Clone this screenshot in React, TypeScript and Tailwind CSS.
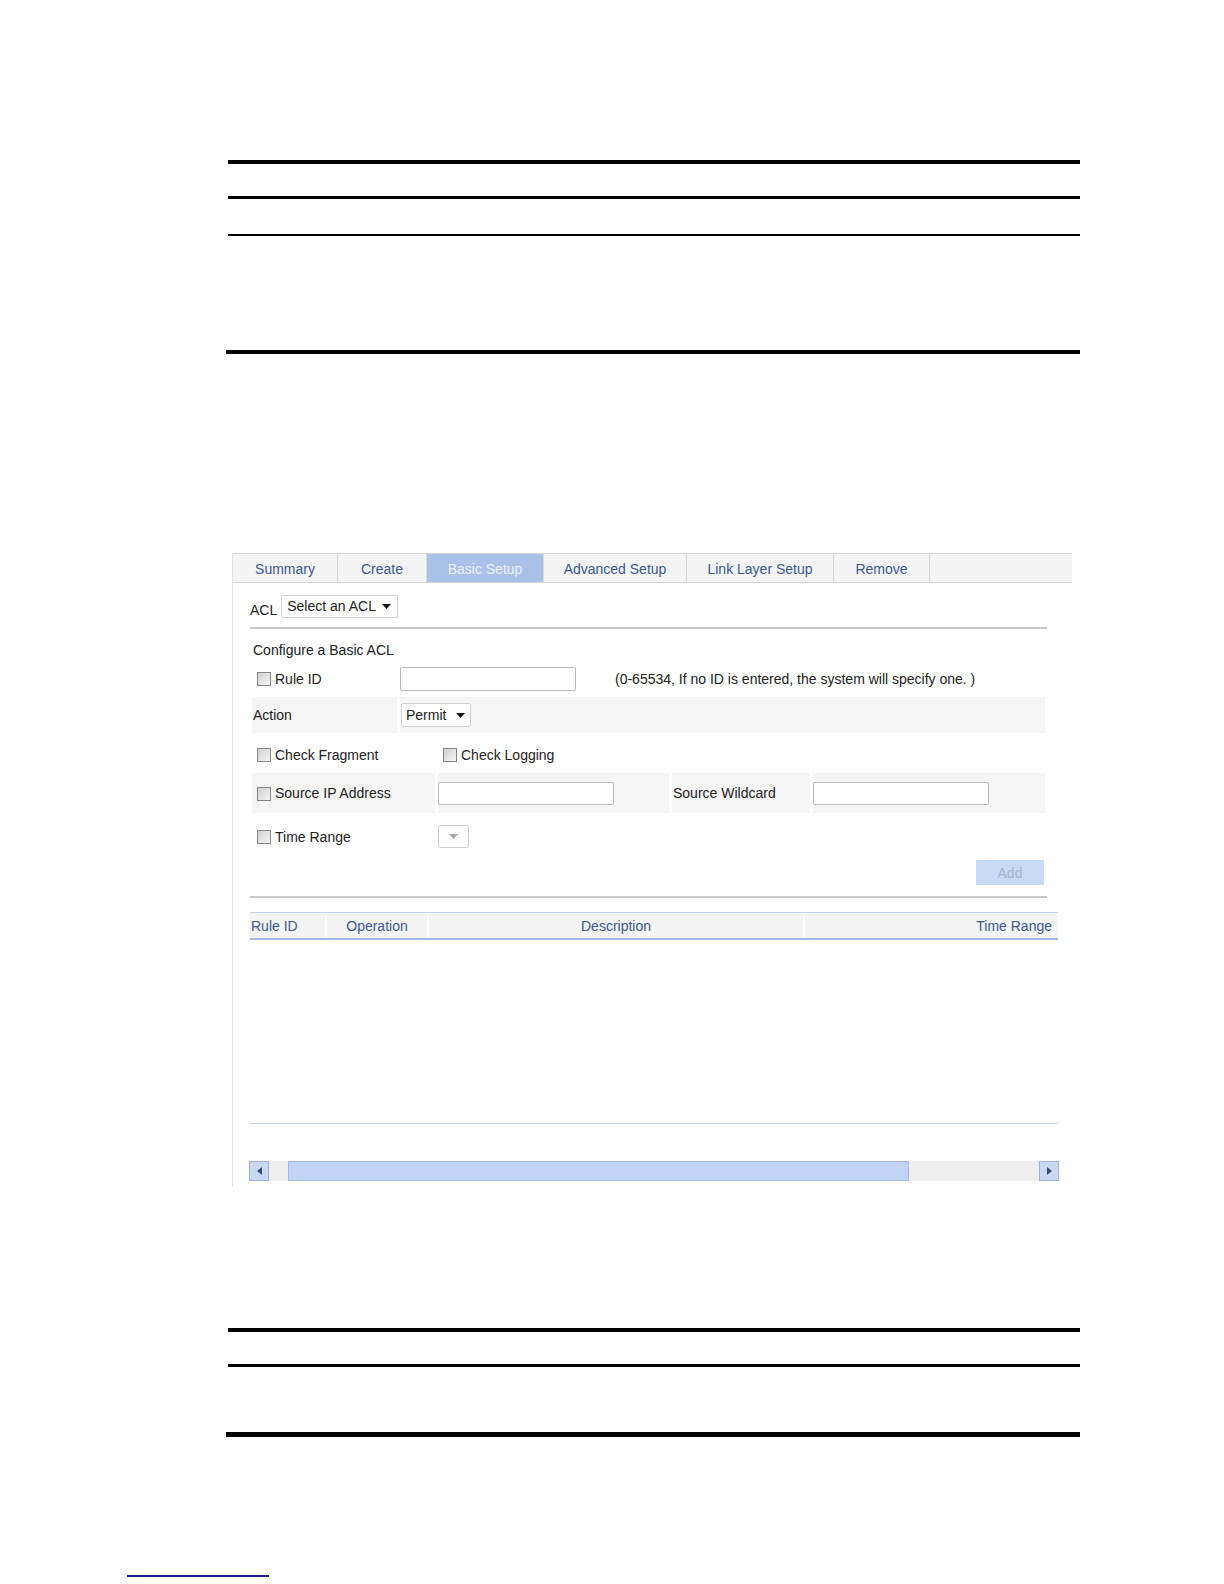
import React from 'react';

function Box() {
  return (
    <span className="inline-block w-[14px] h-[14px] shrink-0 border border-[#858585] bg-gradient-to-br from-[#d0d0d0] to-[#f6f6f6]" />
  );
}

function Caret({ color = '#111' }: { color?: string }) {
  return (
    <svg width="9" height="5" viewBox="0 0 9 5">
      <path d="M0 0h9L4.5 5z" fill={color} />
    </svg>
  );
}

function Check({ label }: { label: string }) {
  return (
    <span className="flex items-center gap-[4px]">
      <Box />
      <span>{label}</span>
    </span>
  );
}

const tabs = [
  { label: 'Summary', cls: 'w-[105px]' },
  { label: 'Create', cls: 'w-[89px]' },
  { label: 'Basic Setup', cls: 'w-[117px] bg-[#a9c1e9] text-[#e9f0fb]', active: true },
  { label: 'Advanced Setup', cls: 'w-[143px]' },
  { label: 'Link Layer Setup', cls: 'w-[147px]' },
  { label: 'Remove', cls: 'w-[96px]' },
];

export default function App() {
  return (
    <div className="relative w-[1224px] h-[1584px] overflow-hidden bg-white font-['Liberation_Sans',Arial,sans-serif] text-[14px] text-[#222]">
      {/* table above the figure */}
      <div className="ml-[228px] w-[852px] pt-[160px]">
        <div className="h-[4px] bg-black" />
        <div className="mt-[32px] h-[3px] bg-black" />
        <div className="mt-[35px] h-[2px] bg-black" />
        <div className="-ml-[2px] mt-[114px] h-[4px] w-[854px] bg-black" />
      </div>

      {/* screenshot */}
      <div className="ml-[232px] mt-[199px] h-[634px] w-[840px] border-l border-[#e3e3e3]">
        <div className="flex h-[30px] border-y border-[#d6d6d6] bg-[#f4f4f4]">
          {tabs.map((t) => (
            <div
              key={t.label}
              className={`flex items-center justify-center pt-[2px] border-r border-[#d8d8d8] ${t.active ? '' : 'text-[#3a5896]'} ${t.cls}`}
            >
              {t.label}
            </div>
          ))}
        </div>

        <div className="pl-[17px]">
          <div className="mt-[12px] flex h-[23px] items-end">
            <span className="leading-[16px]">ACL</span>
            <div className="ml-[4px] flex h-[23px] w-[117px] items-center justify-between rounded-[2px] border border-[#d4d4d4] pl-[5px] pr-[6px]">
              <span>Select an ACL</span>
              <Caret />
            </div>
          </div>
          <div className="mt-[9px] h-[2px] w-[797px] bg-[#c9c9c9]" />
          <div className="mt-[13px] pl-[3px] leading-[16px]">Configure a Basic ACL</div>

          <div className="ml-[2px] w-[793px]">
            <div className="mt-[2px] flex h-[35px] items-center pt-[3px]">
              <div className="w-[148px] pl-[5px]">
                <Check label="Rule ID" />
              </div>
              <div className="h-[24px] w-[176px] rounded-[2px] border border-[#b8b8b8]" />
              <span className="ml-[39px]">(0-65534, If no ID is entered, the system will specify one. )</span>
            </div>

            <div className="mt-[2px] flex h-[36px] gap-[3px]">
              <div className="flex w-[145px] items-center bg-[#f5f5f5] pl-[1px]">Action</div>
              <div className="flex flex-1 items-center bg-[#f5f5f5]">
                <div className="ml-[1px] flex h-[24px] w-[70px] items-center justify-between rounded-[2px] border border-[#d4d4d4] bg-white pl-[4px] pr-[5px]">
                  <span>Permit</span>
                  <Caret />
                </div>
              </div>
            </div>

            <div className="flex h-[40px] items-center pt-[4px]">
              <div className="w-[191px] pl-[5px]">
                <Check label="Check Fragment" />
              </div>
              <Check label="Check Logging" />
            </div>

            <div className="flex h-[40px] gap-[3px]">
              <div className="flex w-[183px] items-center bg-[#f5f5f5] pl-[5px] pt-[1px]">
                <Check label="Source IP Address" />
              </div>
              <div className="flex w-[231px] items-center bg-[#f5f5f5]">
                <div className="h-[23px] w-[176px] rounded-[2px] border border-[#b8b8b8] bg-white" />
              </div>
              <div className="flex w-[138px] items-center bg-[#f5f5f5] pl-[1px]">Source Wildcard</div>
              <div className="flex flex-1 items-center bg-[#f5f5f5]">
                <div className="h-[23px] w-[176px] rounded-[2px] border border-[#b8b8b8] bg-white" />
              </div>
            </div>

            <div className="flex h-[47px] items-center">
              <div className="w-[186px] pl-[5px] pt-[1px]">
                <Check label="Time Range" />
              </div>
              <div className="flex h-[23px] w-[31px] items-center justify-center rounded-[2px] border border-[#cfcfcf]">
                <Caret color="#a8a8a8" />
              </div>
            </div>

            <div className="flex h-[25px] justify-end pr-[1px]">
              <div className="flex w-[68px] items-center justify-center pt-[1px] bg-[#c6d9f5] text-[#a7b4c9]">Add</div>
            </div>
          </div>

          <div className="mt-[11px] h-[2px] w-[797px] bg-[#c9c9c9]" />

          <div className="mt-[14px] flex h-[28px] w-[808px] border-t border-b-2 border-t-[#c4d4ed] border-b-[#a3bbe3] bg-[#f4f4f4] pt-[2px] text-[#3a5896]">
            <div className="flex w-[77px] items-center border-r-2 border-white pl-[1px]">Rule ID</div>
            <div className="flex w-[102px] items-center justify-center border-r-2 border-white">Operation</div>
            <div className="flex w-[376px] items-center justify-center border-r-2 border-white">Description</div>
            <div className="flex flex-1 items-center justify-end pr-[6px]">Time Range</div>
          </div>
          <div className="h-[183px]" />
          <div className="h-[1px] w-[808px] bg-[#c4d4ed]" />

          <div className="-ml-[1px] mt-[37px] flex h-[20px] w-[810px] bg-[#eeeeee]">
            <div className="flex w-[20px] items-center justify-center border border-[#9db3dc] bg-[#c9d9f5]">
              <svg width="5" height="8" viewBox="0 0 5 8">
                <path d="M5 0v8L0 4z" fill="#2f4a78" />
              </svg>
            </div>
            <div className="ml-[19px] w-[621px] border border-[#a2b9e2] bg-[#c1d4f7]" />
            <div className="flex-1" />
            <div className="flex w-[20px] items-center justify-center border border-[#9db3dc] bg-[#c9d9f5]">
              <svg width="5" height="8" viewBox="0 0 5 8">
                <path d="M0 0v8l5-4z" fill="#2f4a78" />
              </svg>
            </div>
          </div>
        </div>
      </div>

      {/* table below the figure */}
      <div className="ml-[228px] mt-[141px] w-[852px]">
        <div className="h-[4px] bg-black" />
        <div className="mt-[32px] h-[3px] bg-black" />
        <div className="-ml-[2px] mt-[65px] h-[5px] w-[854px] bg-black" />
      </div>

      <div className="ml-[127px] mt-[138px] h-[2px] w-[142px] bg-[#1d1d8a]" />
    </div>
  );
}
